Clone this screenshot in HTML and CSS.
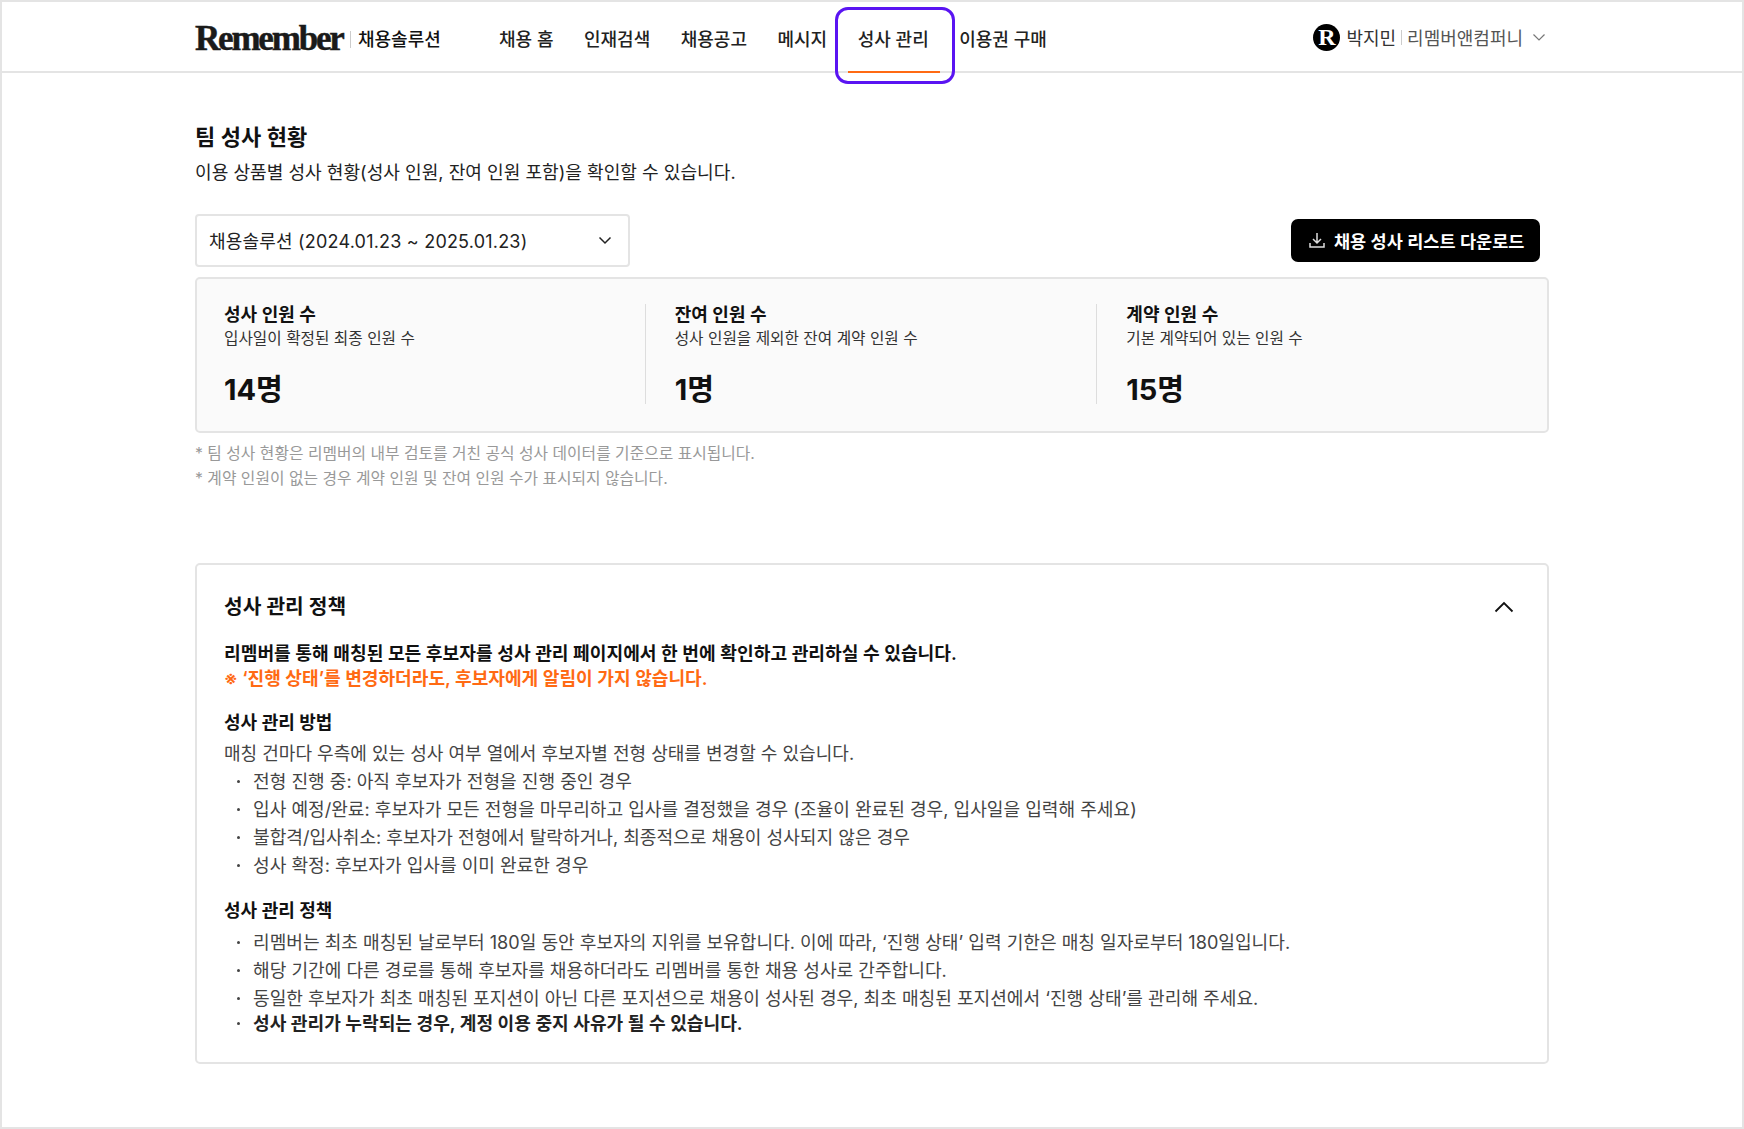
FILE: index.html
```html
<!DOCTYPE html>
<html lang="ko">
<head>
  <meta charset="UTF-8" />
  <title>팀 성사 현황 | Remember 채용솔루션</title>
  <link rel="stylesheet" href="styles.css">
</head>
<body>
  <div class="frame">
    <header class="topbar">
      <div class="inner topbar-row">
        <div class="brand">
          <span class="logo">Remember</span>
          <span class="brand-sep"></span>
          <span class="brand-name">채용솔루션</span>
        </div>
        <nav class="nav">
          <a>채용 홈</a>
          <a>인재검색</a>
          <a>채용공고</a>
          <a>메시지</a>
          <a class="active">성사 관리</a>
          <a>이용권 구매</a>
        </nav>
        <div class="profile">
          <span class="avatar">R</span>
          <span>박지민</span>
          <span class="profile-sep"></span>
          <span class="company">리멤버앤컴퍼니</span>
          <svg class="profile-chevron" width="14" height="14" viewBox="0 0 14 14" fill="none" stroke="#777" stroke-width="1.2"><path d="M1.5 4.5 7 10l5.5-5.5"/></svg>
        </div>
      </div>
    </header>

    <main class="inner">
      <h1 class="page-title">팀 성사 현황</h1>
      <p class="page-desc">이용 상품별 성사 현황(성사 인원, 잔여 인원 포함)을 확인할 수 있습니다.</p>

      <div class="toolbar">
        <div class="select">
          <span>채용솔루션 (2024.01.23 ~ 2025.01.23)</span>
          <svg width="14" height="14" viewBox="0 0 14 14" fill="none" stroke="#222" stroke-width="1.5"><path d="M1.5 4.5 7 10l5.5-5.5"/></svg>
        </div>
        <button class="download-btn">
          <svg width="18" height="18" viewBox="0 0 18 18" fill="none" stroke="#ddd" stroke-width="1.5"><path d="M9 2v9.5M5 8l4 4 4-4M2 12v4h14v-4"/></svg>
          <span>채용 성사 리스트 다운로드</span>
        </button>
      </div>

      <section class="stats">
        <div class="stat">
          <h3>성사 인원 수</h3>
          <p>입사일이 확정된 최종 인원 수</p>
          <strong>14명</strong>
        </div>
        <div class="stat">
          <h3>잔여 인원 수</h3>
          <p>성사 인원을 제외한 잔여 계약 인원 수</p>
          <strong>1명</strong>
        </div>
        <div class="stat">
          <h3>계약 인원 수</h3>
          <p>기본 계약되어 있는 인원 수</p>
          <strong>15명</strong>
        </div>
      </section>

      <div class="notes">
        <p>* 팀 성사 현황은 리멤버의 내부 검토를 거친 공식 성사 데이터를 기준으로 표시됩니다.</p>
        <p>* 계약 인원이 없는 경우 계약 인원 및 잔여 인원 수가 표시되지 않습니다.</p>
      </div>

      <section class="policy">
        <div class="policy-head">
          <h2>성사 관리 정책</h2>
          <svg width="20" height="12" viewBox="0 0 20 12" fill="none" stroke="#111" stroke-width="1.8"><path d="M1.5 10.5 10 2l8.5 8.5"/></svg>
        </div>
        <p class="lead">리멤버를 통해 매칭된 모든 후보자를 성사 관리 페이지에서 한 번에 확인하고 관리하실 수 있습니다.</p>
        <p class="warn">※ ‘진행 상태’를 변경하더라도, 후보자에게 알림이 가지 않습니다.</p>

        <h4>성사 관리 방법</h4>
        <p class="body-text">매칭 건마다 우측에 있는 성사 여부 열에서 후보자별 전형 상태를 변경할 수 있습니다.</p>
        <ul class="first-list">
          <li>전형 진행 중: 아직 후보자가 전형을 진행 중인 경우</li>
          <li>입사 예정/완료: 후보자가 모든 전형을 마무리하고 입사를 결정했을 경우 (조율이 완료된 경우, 입사일을 입력해 주세요)</li>
          <li>불합격/입사취소: 후보자가 전형에서 탈락하거나, 최종적으로 채용이 성사되지 않은 경우</li>
          <li>성사 확정: 후보자가 입사를 이미 완료한 경우</li>
        </ul>

        <h4 class="second">성사 관리 정책</h4>
        <ul class="second-list">
          <li>리멤버는 최초 매칭된 날로부터 180일 동안 후보자의 지위를 보유합니다. 이에 따라, ‘진행 상태’ 입력 기한은 매칭 일자로부터 180일입니다.</li>
          <li>해당 기간에 다른 경로를 통해 후보자를 채용하더라도 리멤버를 통한 채용 성사로 간주합니다.</li>
          <li>동일한 후보자가 최초 매칭된 포지션이 아닌 다른 포지션으로 채용이 성사된 경우, 최초 매칭된 포지션에서 ‘진행 상태’를 관리해 주세요.</li>
          <li class="strong">성사 관리가 누락되는 경우, 계정 이용 중지 사유가 될 수 있습니다.</li>
        </ul>
      </section>
    </main>
  </div>
</body>
</html>
```

FILE: styles.css
```css
*, *::before, *::after {
  box-sizing: border-box;
}
html, body {
  margin: 0;
  padding: 0;
}
body {
  font-family: Inter, 'Noto Sans CJK KR', sans-serif;
  background: #fff;
  color: #111;
}
h1, h2, h3, h4, p, ul {
  margin: 0;
  padding: 0;
}
.frame {
  height: 1129px;
  border: 2px solid #e4e4e4;
  overflow: hidden;
}
.inner {
  width: 1354px;
  margin: 0 auto;
}

/* top bar */
.topbar {
  height: 71px;
  border-bottom: 2px solid #e4e4e4;
}
.topbar-row {
  display: flex;
  align-items: center;
  height: 69px;
}
.brand {
  display: flex;
  align-items: center;
  width: 304px;
  margin-top: 3px;
}
.logo {
  width: 148px;
  font-family: 'Liberation Serif', serif;
  font-weight: 700;
  font-size: 35px;
  letter-spacing: -2.2px;
  -webkit-text-stroke: 0.5px #1a1a1a;
  color: #1a1a1a;
  line-height: 1;
  white-space: nowrap;
}
.brand-sep {
  width: 1px;
  height: 17px;
  margin: 2px 7px 0 7px;
  background: #ccc;
}
.brand-name {
  font-size: 18px;
  font-weight: 500;
}
.nav {
  display: flex;
  gap: 30.5px;
  margin-top: 7px;
  font-size: 18px;
  font-weight: 500;
  line-height: 26px;
  color: #222;
}
.nav a {
  position: relative;
  white-space: nowrap;
}
.nav .active::before {
  content: "";
  position: absolute;
  left: -10px;
  right: -11px;
  top: 44px;
  height: 2px;
  background: #ff6a13;
}
.nav .active::after {
  content: "";
  position: absolute;
  left: -23px;
  right: -26px;
  top: -20px;
  height: 77px;
  border: 3px solid #5a14f2;
  border-radius: 13px;
}
.profile {
  display: flex;
  align-items: center;
  margin-left: auto;
  margin-top: 1px;
  margin-right: 3px;
  font-size: 18px;
  color: #333;
}
.avatar {
  width: 27px;
  height: 27px;
  margin-right: 6px;
  border-radius: 50%;
  background: #000;
  color: #fff;
  font-family: 'Liberation Serif', serif;
  font-weight: 700;
  font-size: 24px;
  line-height: 27px;
  text-align: center;
}
.profile-sep {
  width: 1px;
  height: 15px;
  margin: 0 5px;
  background: #ccc;
}
.company {
  color: #555;
}
.profile-chevron {
  margin-left: 9px;
}

/* heading */
.page-title {
  margin-top: 48px;
  font-size: 22px;
  font-weight: 600;
  line-height: 32px;
}
.page-desc {
  margin-top: 5px;
  font-size: 18.1px;
  line-height: 28px;
  color: #222;
}
.toolbar {
  display: flex;
  align-items: center;
  justify-content: space-between;
  margin-top: 28px;
  padding-right: 9px;
}
.select {
  display: flex;
  align-items: center;
  justify-content: space-between;
  width: 435px;
  height: 53px;
  padding: 0 16px 2px 12px;
  border: 2px solid #e4e4e4;
  border-radius: 4px;
  font-size: 18px;
  letter-spacing: 0.2px;
  color: #222;
}
.download-btn {
  display: flex;
  align-items: center;
  gap: 8px;
  width: 249px;
  height: 43px;
  padding: 0 0 1px 17px;
  border: none;
  border-radius: 7px;
  background: #000;
  color: #fff;
  font-family: inherit;
  font-size: 17.5px;
  font-weight: 600;
}

/* stats card */
.stats {
  display: flex;
  height: 156px;
  margin-top: 10px;
  padding: 25px 0 0 27px;
  border: 2px solid #e4e4e4;
  border-radius: 5px;
  background: #fafafa;
}
.stat {
  width: 452px;
  height: 100px;
  border-right: 1px solid #ddd;
}
.stat:first-child {
  width: 424px;
}
.stat + .stat {
  padding-left: 29px;
}
.stat:last-child {
  border-right: none;
}
.stat:nth-child(2) {
  width: 454px;
}
.stat h3 {
  margin-top: -1px;
  font-size: 18px;
  font-weight: 600;
  line-height: 24px;
}
.stat p {
  margin-top: 1px;
  font-size: 15.7px;
  line-height: 22px;
  color: #333;
}
.stat strong {
  display: block;
  margin-top: 20px;
  font-size: 29px;
  font-weight: 700;
  line-height: 40px;
}
.notes {
  margin-top: 9px;
  font-size: 15.8px;
  line-height: 24.5px;
  color: #999;
}

/* policy card */
.policy {
  height: 501px;
  margin-top: 72px;
  padding: 24px 27px 0;
  border: 2px solid #e4e4e4;
  border-radius: 5px;
}
.policy-head {
  display: flex;
  align-items: center;
  justify-content: space-between;
  padding-right: 6px;
  height: 32px;
}
.policy-head h2 {
  font-size: 20.3px;
  font-weight: 600;
}
.policy-head svg {
  margin-top: 4px;
}
.lead {
  margin-top: 20px;
  font-size: 18.15px;
  font-weight: 600;
  line-height: 24px;
}
.warn {
  font-size: 18.1px;
  font-weight: 600;
  line-height: 26px;
  color: #ff6a13;
}
.policy h4 {
  margin-top: 19px;
  font-size: 18px;
  font-weight: 600;
  line-height: 26px;
}
.policy h4.second {
  margin-top: 19px;
}
.body-text {
  margin-top: 4px;
  font-size: 18.05px;
  line-height: 28px;
  color: #444;
}
.policy ul {
  list-style: none;
  font-size: 18.1px;
  line-height: 28px;
  color: #444;
}
.policy .first-list {
  margin-top: -1px;
}
.policy .second-list {
  margin-top: 4px;
}
.policy li {
  position: relative;
  padding-left: 29px;
}
.policy li::before {
  content: "";
  position: absolute;
  left: 13px;
  top: 13px;
  width: 3px;
  height: 3px;
  border-radius: 50%;
  background: #444;
}
.policy li.strong {
  margin-top: -3px;
  font-weight: 600;
  color: #222;
}
```
